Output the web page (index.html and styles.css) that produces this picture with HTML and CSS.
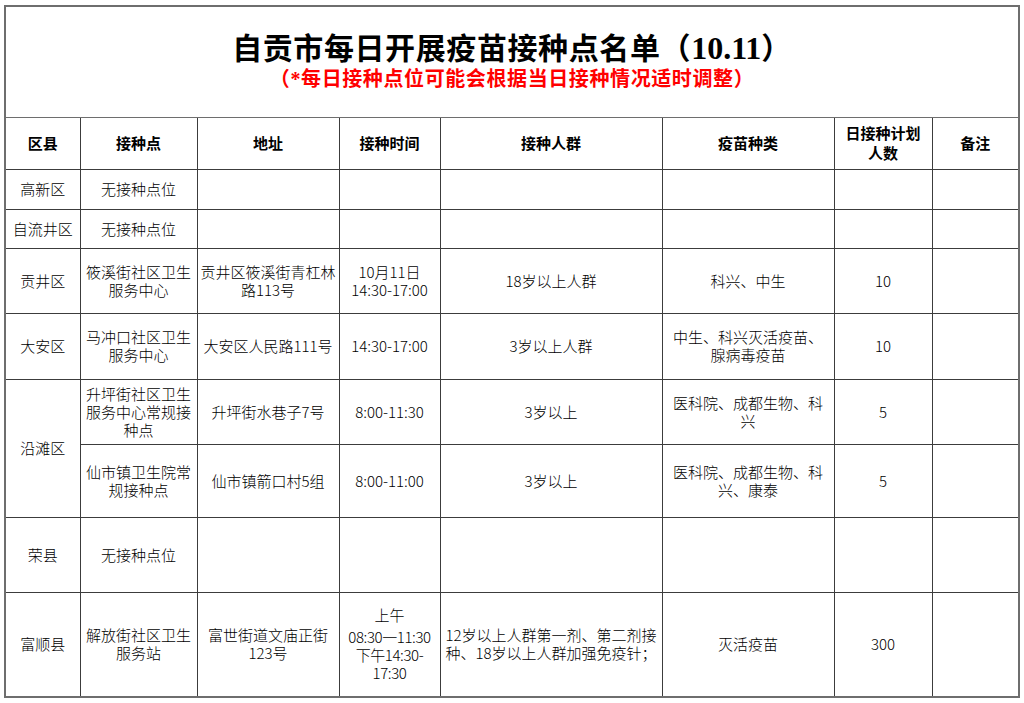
FILE: index.html
```html
<!DOCTYPE html>
<html lang="zh-CN">
<head>
<meta charset="utf-8">
<title>自贡市每日开展疫苗接种点名单</title>
<link rel="stylesheet" href="styles.css">
</head>
<body>
<table class="sheet">
  <colgroup>
    <col class="c-area">
    <col class="c-site">
    <col class="c-addr">
    <col class="c-time">
    <col class="c-crowd">
    <col class="c-vac">
    <col class="c-plan">
    <col class="c-note">
  </colgroup>
  <tr class="r-title">
    <td colspan="8" class="title-cell">
      <div class="title">自贡市每日开展疫苗接种点名单（<span class="num">10.11</span>）</div>
      <div class="subtitle">（*每日接种点位可能会根据当日接种情况适时调整）</div>
    </td>
  </tr>
  <tr class="r-head">
    <td>区县</td>
    <td>接种点</td>
    <td>地址</td>
    <td>接种时间</td>
    <td>接种人群</td>
    <td>疫苗种类</td>
    <td>日接种计划<br>人数</td>
    <td>备注</td>
  </tr>
  <tr class="r-40">
    <td>高新区</td>
    <td>无接种点位</td>
    <td></td><td></td><td></td><td></td><td></td><td></td>
  </tr>
  <tr class="r-39">
    <td>自流井区</td>
    <td>无接种点位</td>
    <td></td><td></td><td></td><td></td><td></td><td></td>
  </tr>
  <tr class="r-65">
    <td>贡井区</td>
    <td>筱溪街社区卫生<br>服务中心</td>
    <td>贡井区筱溪街青杠林<br>路113号</td>
    <td>10月11日<br>14:30-17:00</td>
    <td>18岁以上人群</td>
    <td>科兴、中生</td>
    <td>10</td>
    <td></td>
  </tr>
  <tr class="r-66">
    <td>大安区</td>
    <td>马冲口社区卫生<br>服务中心</td>
    <td>大安区人民路111号</td>
    <td>14:30-17:00</td>
    <td>3岁以上人群</td>
    <td>中生、科兴灭活疫苗、<br>腺病毒疫苗</td>
    <td>10</td>
    <td></td>
  </tr>
  <tr class="r-65">
    <td rowspan="2">沿滩区</td>
    <td>升坪街社区卫生<br>服务中心常规接<br>种点</td>
    <td>升坪街水巷子7号</td>
    <td>8:00-11:30</td>
    <td>3岁以上</td>
    <td>医科院、成都生物、科<br>兴</td>
    <td>5</td>
    <td></td>
  </tr>
  <tr class="r-73">
    <td>仙市镇卫生院常<br>规接种点</td>
    <td>仙市镇箭口村5组</td>
    <td>8:00-11:00</td>
    <td>3岁以上</td>
    <td>医科院、成都生物、科<br>兴、康泰</td>
    <td>5</td>
    <td></td>
  </tr>
  <tr class="r-75">
    <td>荣县</td>
    <td>无接种点位</td>
    <td></td><td></td><td></td><td></td><td></td><td></td>
  </tr>
  <tr class="r-105">
    <td>富顺县</td>
    <td>解放街社区卫生<br>服务站</td>
    <td>富世街道文庙正街<br>123号</td>
    <td class="time-multi"><span class="am">上午</span>08:30一11:30<br>下午14:30-<br>17:30</td>
    <td>12岁以上人群第一剂、第二剂接<br>种、18岁以上人群加强免疫针；</td>
    <td>灭活疫苗</td>
    <td>300</td>
    <td></td>
  </tr>
</table>
</body>
</html>
```

FILE: styles.css
```css
html, body {
  margin: 0;
  padding: 0;
  background: #ffffff;
}

.sheet {
  border-collapse: collapse;
  table-layout: fixed;
  width: 1016px;
  margin: 5px 0 0 4px;
  border: 2px solid #6e6e6e;
  font-family: "Noto Sans CJK SC", "Noto Sans CJK JP", sans-serif;
  font-size: 15px;
  font-weight: 300;
  color: #000000;
}

.c-area { width: 75px; }
.c-site { width: 117px; }
.c-addr { width: 142px; }
.c-time { width: 101px; }
.c-crowd { width: 222px; }
.c-vac { width: 172px; }
.c-plan { width: 98px; }
.c-note { width: 87px; }

.sheet td {
  border: 1px solid #3c3c3c;
  text-align: center;
  vertical-align: middle;
  padding: 0 1px;
  line-height: 18px;
  white-space: nowrap;
}

.r-title { height: 111px; }
.r-head { height: 52px; }
.r-40 { height: 40px; }
.r-39 { height: 39px; }
.r-65 { height: 65px; }
.r-66 { height: 66px; }
.r-73 { height: 73px; }
.r-75 { height: 75px; }
.r-105 { height: 105px; }

.sheet .title-cell {
  border-color: #6e6e6e;
  padding: 0;
}

.title {
  font-family: "Liberation Serif", "Noto Sans CJK SC", serif;
  font-weight: 700;
  font-size: 30px;
  line-height: 34px;
  letter-spacing: 0.6px;
  color: #000000;
}

.title .num {
  font-family: "Liberation Serif", serif;
  font-size: 32px;
  letter-spacing: 0;
}

.subtitle {
  font-family: "Liberation Serif", "Noto Sans CJK SC", serif;
  font-weight: 700;
  font-size: 20px;
  line-height: 26px;
  letter-spacing: 0.6px;
  color: #ff0000;
}

.r-head td {
  font-weight: 700;
  line-height: 20px;
}

.time-multi {
  letter-spacing: -0.4px;
}

.time-multi .am {
  display: block;
  margin-bottom: 4px;
  letter-spacing: 0;
}
```
